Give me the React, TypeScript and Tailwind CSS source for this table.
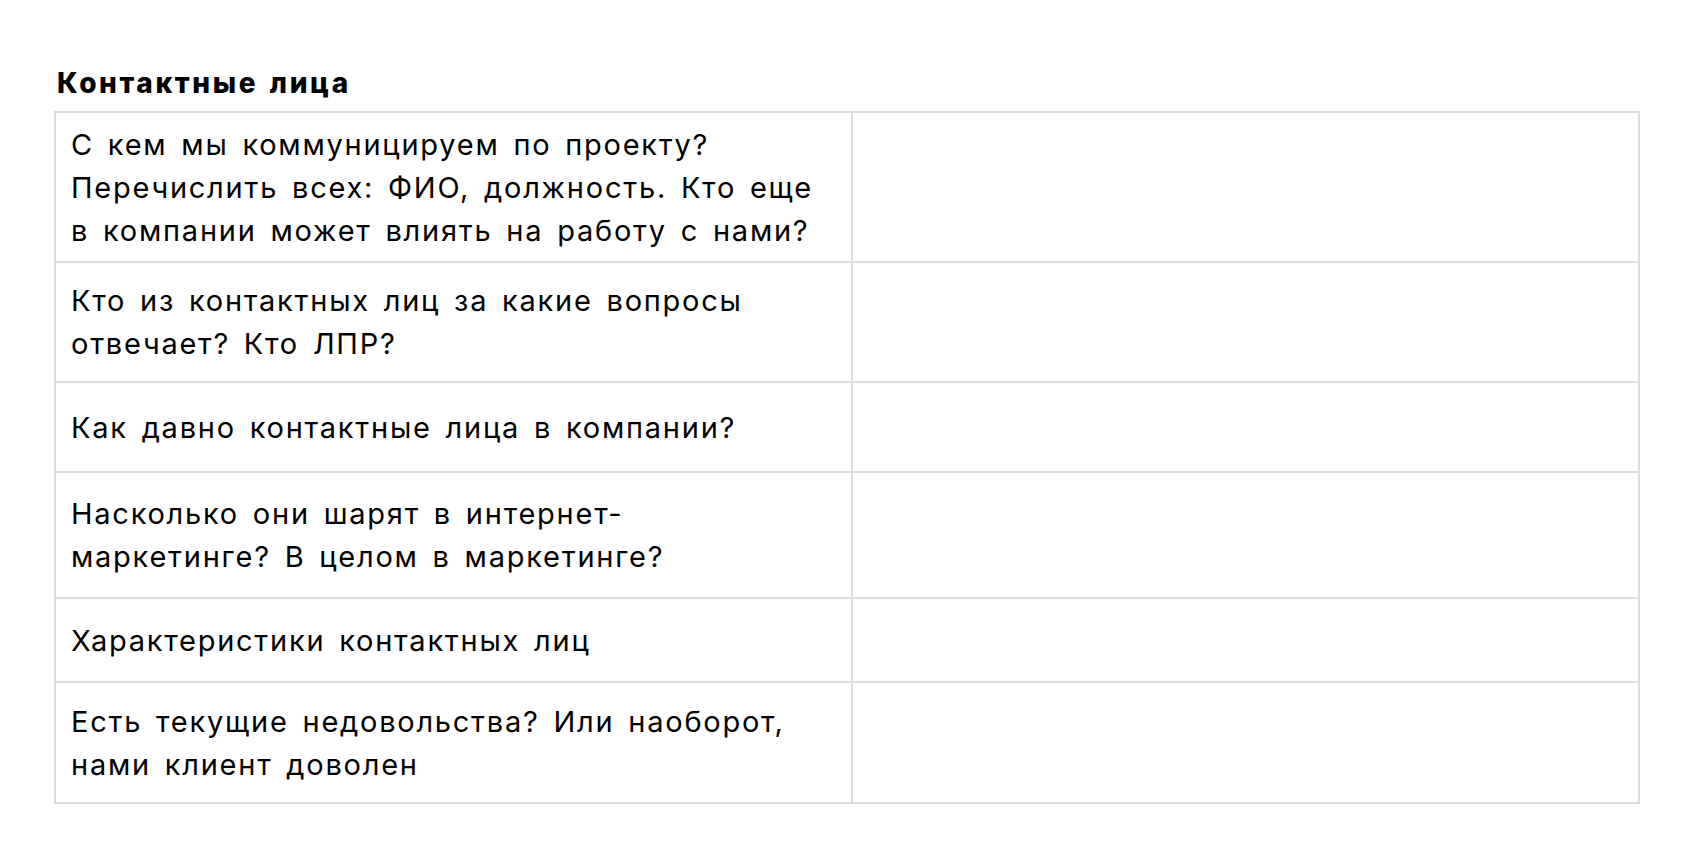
import React from 'react';

const rows: { text: string[]; h: string }[] = [
  { text: ['С кем мы коммуницируем по проекту?', 'Перечислить всех: ФИО, должность. Кто еще', 'в компании может влиять на работу с нами?'], h: 'h-[148px]' },
  { text: ['Кто из контактных лиц за какие вопросы', 'отвечает? Кто ЛПР?'], h: 'h-[120px]' },
  { text: ['Как давно контактные лица в компании?'], h: 'h-[90px]' },
  { text: ['Насколько они шарят в интернет-', 'маркетинге? В целом в маркетинге?'], h: 'h-[126px]' },
  { text: ['Характеристики контактных лиц'], h: 'h-[84px]' },
  { text: ['Есть текущие недовольства? Или наоборот,', 'нами клиент доволен'], h: 'h-[121px]' },
];

const App: React.FC = () => {
  return (
    <div className="min-h-screen bg-white text-black" style={{ fontFamily: 'Inter, "Noto Sans", sans-serif' }}>
      <div className="pl-[57px] pt-[67px] pr-[63px]">
        <h2 className="text-[28px] font-extrabold leading-[32px] mb-[12px] tracking-[2.6px] [word-spacing:3px]">
          Контактные лица
        </h2>

        {/* Table */}
        <div className="ml-[-3px] border-2 border-[#dcdcdc] w-[1586px]">
          {rows.map((row, i) => (
            <div key={i} className={`flex ${row.h} ${i > 0 ? 'border-t-2 border-[#dcdcdc]' : ''}`}>
              <div className="w-[797px] shrink-0 border-r-2 border-[#dcdcdc] flex items-center pl-[15px]">
                <div className="text-[29px] leading-[43px] tracking-[1.75px] [word-spacing:4px] whitespace-nowrap">
                  {row.text.map((t, j) => (
                    <div key={j}>{t}</div>
                  ))}
                </div>
              </div>
              <div className="flex-1"></div>
            </div>
          ))}
        </div>
      </div>
    </div>
  );
};

export default App;
